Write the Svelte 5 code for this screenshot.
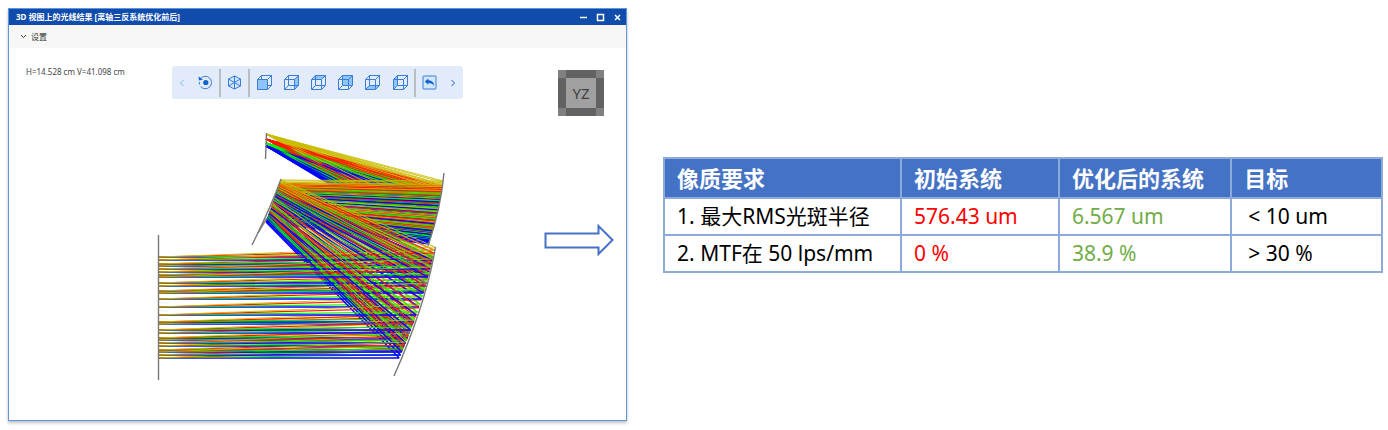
<script>
  const sourceX = 158
  const sourceY = [257, 260, 264, 266, 269, 272, 275, 277, 283, 286, 291, 293, 299, 307, 315, 322, 324, 330, 333, 338, 340, 343, 346, 350, 352, 355, 358]

  // one entry per field angle
  const fields = [
    { color: '#c8bc00', rise: 10, start: 0, image: 134, width: 0.9 },
    { color: '#ff1800', rise: 7, start: 0.08, image: 139, width: 1.2 },
    { color: '#00f000', rise: 3, start: 0.16, image: 143, width: 1.1 },
    { color: '#0000ff', rise: 0, start: 0.24, image: 146, width: 1.4 }
  ]

  function primary (y) {
    const d = y - 247
    return [435 - 0.2 * d - 0.0011 * d * d, y]
  }

  function secondary (s) {
    return [281 - 15 * s, 180 + 42 * s]
  }

  function tertiary (s) {
    return [443 - 9 * s - 5 * s * s, 181 + 63 * s]
  }

  function line (a, b) {
    return `M${a[0].toFixed(1)} ${a[1].toFixed(1)}L${b[0].toFixed(1)} ${b[1].toFixed(1)}`
  }

  // step through the pupil out of order so that no field hides the others
  const order = sourceY.map((y, i) => sourceY[(i * 10) % sourceY.length])

  const focused = []
  const crossing = []
  const primaryRays = []

  order.forEach((y) => {
    const t = (y - 257) / 101
    fields.forEach((field, j) => {
      const s = field.start + 0.76 * t
      const m1 = primary(y - field.rise)
      const m2 = secondary(s)
      const m3 = tertiary(s)
      focused.push({ d: line(m3, [266, field.image]), color: field.color, width: field.width })
      crossing.push({ d: line(m2, m3), color: field.color, width: field.width })
      primaryRays.push({ d: line(m1, m2), color: field.color, width: field.width })
      // yellow closes each bundle at the entrance side
      const front = fields[3 - j]
      primaryRays.push({ d: line([sourceX, y], primary(y - front.rise)), color: front.color, width: front.width })
    })
  })

  const rays = [...focused, ...crossing, ...primaryRays]

  const views = [
    { name: 'Front', face: 'M0.5 4.5H10.5V14.5H0.5Z' },
    { name: 'Right', face: 'M10.5 4.5L14.5 0.5V10.5L10.5 14.5Z' },
    { name: 'Top', face: 'M0.5 4.5L4.5 0.5H14.5L10.5 4.5Z' },
    { name: 'Back', face: 'M4.5 0.5H14.5V10.5H4.5Z' },
    { name: 'Bottom', face: 'M0.5 14.5L4.5 10.5H14.5L10.5 14.5Z' },
    { name: 'Left', face: 'M0.5 4.5L4.5 0.5V10.5L0.5 14.5Z' }
  ]

  const rows = [
    { name: '1. 最大RMS光斑半径', initial: '576.43 um', optimized: '6.567 um', target: '< 10 um' },
    { name: '2. MTF在 50 lps/mm', initial: '0 %', optimized: '38.9 %', target: '> 30 %' }
  ]
</script>

<main>
  <section class="window">
    <header>
      <h1>3D 视图上的光线结果 [离轴三反系统优化前后]</h1>
      <div class="controls">
        <button aria-label="Minimize"><svg width="9" height="9" viewBox="0 0 9 9"><path d="M1 4.5H8" /></svg></button>
        <button aria-label="Maximize"><svg width="9" height="9" viewBox="0 0 9 9"><rect x="1.5" y="1.5" width="6" height="6" /></svg></button>
        <button aria-label="Close"><svg width="9" height="9" viewBox="0 0 9 9"><path d="M2 2L7 7M7 2L2 7" /></svg></button>
      </div>
    </header>
    <button class="settings">
      <svg width="7" height="5" viewBox="0 0 7 5"><path d="M1 1L3.5 3.5L6 1" /></svg>
      设置
    </button>

    <div class="view">
      <div class="top">
        <div class="size">H=14.528 cm V=41.098 cm</div>
        <div class="toolbar">
          <button class="step prev" aria-label="Previous"><svg width="6" height="8" viewBox="0 0 6 8"><path d="M4.5 1L1.5 4L4.5 7" /></svg></button>
          <button aria-label="Rotate">
            <svg width="15" height="15" viewBox="0 0 15 15">
              <path d="M2.6 3.5A6.2 6.2 0 1 1 2.6 11.5" />
              <path d="M1.4 7V9.5" />
              <path class="solid" d="M0.5 1.5L1 5.6L5 4.6Z" />
              <circle class="solid" cx="7.8" cy="7.5" r="2.6" />
            </svg>
          </button>
          <span class="separator"></span>
          <button class="iso" aria-label="Isometric">
            <svg width="15" height="15" viewBox="0 0 15 15">
              <path class="face" d="M7.5 1L13.5 4V11L7.5 14L1.5 11V4Z" />
              <path d="M7.5 7.5V14M1.5 4L7.5 7.5L13.5 4M7.5 1V7.5M1.5 11L7.5 7.5L13.5 11" />
            </svg>
          </button>
          <span class="separator"></span>
          {#each views as view (view.name)}
            <button aria-label={view.name}>
              <svg width="15" height="15" viewBox="0 0 15 15">
                {#if view.name === 'Front'}
                  <path d="M4.5 0.5H14.5V10.5H4.5ZM4.5 10.5L0.5 14.5" />
                  <path class="face" d={view.face} />
                {:else}
                  <path class="face" d={view.face} />
                  <path d="M4.5 0.5H14.5V10.5H4.5ZM4.5 10.5L0.5 14.5" />
                {/if}
                <path d="M0.5 4.5H10.5V14.5H0.5ZM0.5 4.5L4.5 0.5H14.5L10.5 4.5M10.5 14.5L14.5 10.5" />
              </svg>
            </button>
          {/each}
          <span class="separator"></span>
          <button aria-label="Reset">
            <svg width="15" height="15" viewBox="0 0 15 15">
              <rect class="pale" x="1" y="1" width="13" height="13" rx="0.5" />
              <path class="solid" d="M2.8 6.5L6.3 3.5V5.3C9.8 5.3 12 7.5 12.2 11C10.8 8.8 9 8 6.3 8V9.7Z" />
            </svg>
          </button>
          <button class="step next" aria-label="Next"><svg width="6" height="8" viewBox="0 0 6 8"><path d="M1.5 1L4.5 4L1.5 7" /></svg></button>
        </div>
        <div class="cube"><span>YZ</span></div>
      </div>

      <div class="scene">
        <svg width="296" height="254" viewBox="154 130 296 254">
          {#each rays as ray}
            <path d={ray.d} stroke={ray.color} stroke-width={ray.width} />
          {/each}
          <g class="mirrors">
            <path d="M158.5 235V380" />
            <path d="M266.5 133L265.5 159" />
            <path d="M281 179Q271 207 252 245" />
            <path d="M267 218L258 233" />
            <path d="M444 173Q441 208 428 246" />
            <path d="M435.5 247Q426 304 394 376" />
          </g>
        </svg>
        <svg class="arrow" width="70" height="32" viewBox="0 0 70 32">
          <path d="M1.5 9.5H54.5V2L68.5 16L54.5 30V23.5H1.5Z" />
        </svg>
      </div>
    </div>
  </section>

  <div class="results">
    <table>
      <thead>
        <tr>
          <th class="name">像质要求</th>
          <th class="initial">初始系统</th>
          <th class="optimized">优化后的系统</th>
          <th class="target">目标</th>
        </tr>
      </thead>
      <tbody>
        {#each rows as row (row.name)}
          <tr>
            <td>{row.name}</td>
            <td class="bad">{row.initial}</td>
            <td class="good">{row.optimized}</td>
            <td class="goal">{row.target}</td>
          </tr>
        {/each}
      </tbody>
    </table>
  </div>
</main>

<style>
  :global(body) {
    margin: 0;
    background: #fff;
  }

  main {
    display: flex;
    align-items: center;
    gap: 36px;
    padding: 8px 5px 8px 8px;
    font-family: "Noto Sans", "Noto Sans CJK SC", sans-serif;
  }

  button {
    display: flex;
    align-items: center;
    justify-content: center;
    margin: 0;
    padding: 0;
    border: 0;
    background: none;
    font: inherit;
    color: inherit;
  }

  svg {
    display: block;
    fill: none;
  }

  .window {
    flex: 618 1 0;
    box-sizing: border-box;
    border: 1px solid #5b97e0;
    background: #fff;
    box-shadow: 0 2px 3px rgba(0, 0, 0, 0.25);
  }

  header {
    display: flex;
    align-items: center;
    justify-content: space-between;
    height: 16px;
    padding: 0 4px 0 7px;
    background: #0f4cac;
    color: #fff;
  }

  h1 {
    margin: 0;
    font-size: 8px;
    line-height: 16px;
    font-weight: 700;
  }

  .controls {
    display: flex;
    gap: 8px;
  }

  .controls svg {
    stroke: #fff;
    stroke-width: 1.5;
  }

  .settings {
    width: 100%;
    height: 23px;
    justify-content: flex-start;
    gap: 4px;
    padding: 0 11px;
    background: #f7f7f7;
    color: #333;
    font-size: 8px;
  }

  .settings svg {
    stroke: #444;
  }

  .view {
    padding: 18px 22px 36px 17px;
  }

  .top {
    display: grid;
    grid-template-columns: 146px 291px 1fr;
    align-items: start;
  }

  .size {
    font-size: 8px;
    line-height: 12px;
    color: #444;
  }

  .toolbar {
    display: flex;
    align-items: center;
    height: 33px;
    border-radius: 3px;
    background: #e1ebfa;
  }

  .toolbar button {
    flex: 1;
  }

  .toolbar .step {
    flex: 0 0 20px;
  }

  .toolbar svg {
    stroke: #3a7edb;
    stroke-width: 1;
  }

  .toolbar .prev svg {
    stroke: #80b4f0;
  }

  .toolbar .next svg {
    stroke: #1f62c4;
  }

  .toolbar .face {
    fill: #8fc4f7;
    stroke: none;
  }

  .toolbar .iso .face {
    fill: #d0e5fb;
    stroke: #3a7edb;
  }

  .toolbar .pale {
    fill: #d3e6fb;
  }

  .toolbar .solid {
    fill: #1264c8;
    stroke: none;
  }

  .separator {
    width: 2px;
    height: 28px;
    background: #b9bdc1;
  }

  .cube {
    justify-self: end;
    display: grid;
    box-sizing: border-box;
    width: 46px;
    height: 46px;
    margin-top: 4px;
    padding: 8px;
    background:
      linear-gradient(#808080, #808080) 0 0 / 8px 8px no-repeat,
      linear-gradient(#808080, #808080) 100% 0 / 8px 8px no-repeat,
      linear-gradient(#808080, #808080) 0 100% / 8px 8px no-repeat,
      linear-gradient(#808080, #808080) 100% 100% / 8px 8px no-repeat,
      #626262;
  }

  .cube span {
    background: #a0a0a0;
    color: #404040;
    font-size: 15px;
    line-height: 30px;
    text-align: center;
  }

  .scene {
    display: flex;
    align-items: flex-start;
    justify-content: space-between;
    margin: 14px -10px 0 128px;
  }

  .mirrors {
    stroke: #777;
    stroke-width: 1.4;
  }

  .arrow {
    margin-top: 94px;
    stroke: #4472c4;
    stroke-width: 2;
  }

  .results {
    flex: 721 1 0;
  }

  table {
    width: 100%;
    table-layout: fixed;
    border-collapse: collapse;
    font-size: 21px;
    line-height: 28px;
    color: #000;
  }

  th,
  td {
    box-sizing: border-box;
    height: 37px;
    padding: 0 12px;
    border: 2px solid #8eaadb;
    text-align: left;
    white-space: nowrap;
  }

  th {
    height: 40px;
    background: #4472c4;
    color: #fff;
    font-size: 22px;
    font-weight: 700;
  }

  .name {
    width: 33%;
  }

  .initial {
    width: 22%;
  }

  .optimized {
    width: 24%;
  }

  .bad {
    color: #ff0000;
  }

  .good {
    color: #70ad47;
  }

  .goal {
    padding-left: 16px;
  }
</style>
